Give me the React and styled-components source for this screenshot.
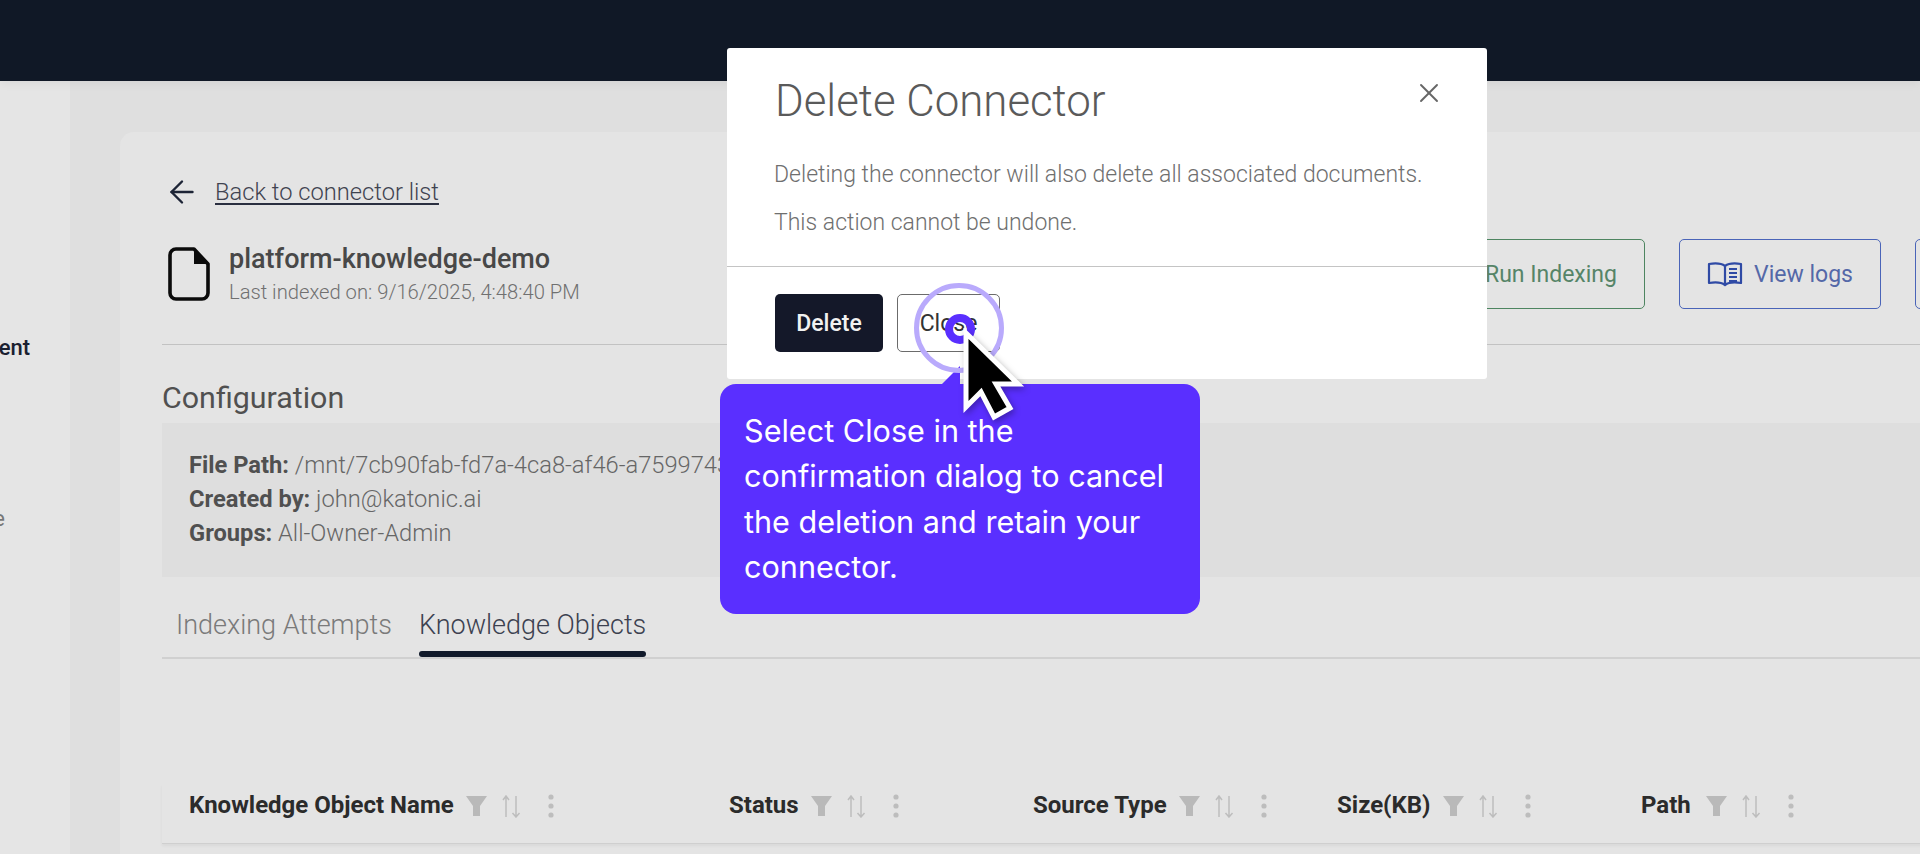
import React from "react";
import styled, { createGlobalStyle } from "styled-components";
import { ArrowLeft, X } from "lucide-react";

const Global = createGlobalStyle`
  html, body { margin: 0; padding: 0; height: 100%; overflow: hidden; background: #e4e4e4; }
  body { font-family: Roboto, "Liberation Sans", sans-serif; }
  * { box-sizing: border-box; }
`;

const Page = styled.div`
  position: relative;
  width: 1920px;
  height: 854px;
  overflow: hidden;
  display: flex;
  flex-direction: column;
`;
const TopBar = styled.header`
  height: 81px;
  flex: none;
  background: #101826;
  position: relative;
  box-shadow: 0 2px 10px rgba(0, 0, 0, 0.06);
`;
const Body = styled.div`
  flex: 1;
  display: flex;
  min-height: 0;
  background: #dfdfdf;
`;
const Sidebar = styled.aside`
  width: 70px;
  flex: none;
  background: #e5e5e5;
  padding-top: 254px;
  overflow: hidden;
`;
const SideItem = styled.div`
  display: flex;
  justify-content: flex-end;
  font-size: 22px;
  line-height: 26px;
  white-space: nowrap;
  color: ${(p) => (p.$active ? "#1a2030" : "#777")};
  font-weight: ${(p) => (p.$active ? 500 : 400)};
  margin-right: ${(p) => p.$right}px;
  margin-bottom: ${(p) => p.$gap || 0}px;
`;
const Main = styled.main`
  flex: none;
  padding: 51px 0 0 50px;
`;
const Card = styled.section`
  width: 1955px;
  height: 760px;
  background: #e4e4e4;
  border-radius: 14px;
  padding: 46px 40px 0 42px;
`;
const BackRow = styled.div`
  display: flex;
  align-items: center;
  gap: 15px;
  height: 28px;
  padding-left: 2px;
  color: #1d2436;
`;
const BackLink = styled.a`
  font-size: 23.7px;
  font-weight: 300;
  color: #3f4350;
  text-decoration: underline;
  text-underline-offset: 3px;
  text-decoration-color: #2a2f40;
`;
const HeadRow = styled.div`
  display: flex;
  align-items: center;
  height: 70px;
  margin-top: 33px;
`;
const FileBox = styled.div`
  display: flex;
  align-items: center;
  gap: 19px;
  padding-left: 6px;
`;
const FileName = styled.div`
  font-size: 27px;
  line-height: 32px;
  font-weight: 500;
  color: #484848;
`;
const FileMeta = styled.div`
  font-size: 20.2px;
  line-height: 26px;
  margin-top: 4px;
  font-weight: 300;
  color: #707070;
`;
const Actions = styled.div`
  margin-left: auto;
  display: flex;
  gap: 34px;
`;
const ActionButton = styled.button`
  height: 70px;
  width: ${(p) => p.$w}px;
  background: transparent;
  border: 1.5px solid ${(p) => p.$c};
  border-radius: 5px;
  color: ${(p) => p.$text};
  font: 400 23px Roboto, sans-serif;
  display: inline-flex;
  align-items: center;
  justify-content: ${(p) => p.$justify || "center"};
  gap: 11px;
  padding: 0 ${(p) => p.$pr || 0}px 0 0;
`;
const Rule = styled.hr`
  margin: 35px 0 0;
  border: 0;
  height: 1px;
  background: #c2c2c2;
`;
const SectionTitle = styled.h2`
  margin: 36px 0 0;
  font-size: 30.4px;
  line-height: 34px;
  font-weight: 400;
  color: #505050;
`;
const ConfigBox = styled.div`
  margin-top: 8px;
  height: 154px;
  background: #dedede;
  padding: 25px 27px;
  font-size: 23.7px;
  line-height: 34px;
  font-weight: 300;
  color: #666;
`;
const ConfigLine = styled.div`
  white-space: nowrap;
  b { font-weight: 700; color: #505050; }
`;
const Tabs = styled.div`
  margin-top: 22px;
  height: 60px;
  display: flex;
  gap: 27px;
  padding-left: 14px;
  border-bottom: 2px solid #d0d0d0;
`;
const Tab = styled.div`
  position: relative;
  font-size: 27px;
  line-height: 52px;
  font-weight: 300;
  color: ${(p) => (p.$active ? "#3c4150" : "#7a7a7a")};
  ${(p) => p.$active && `
    &::after {
      content: "";
      position: absolute;
      left: 0;
      right: 0;
      top: 52px;
      height: 6px;
      border-radius: 3px;
      background: #111a2b;
    }
  `}
`;
const HeaderGrid = styled.div`
  margin-top: 125px;
  height: 60px;
  display: grid;
  grid-template-columns: 540px 304px 304px 304px 304px 1fr;
  padding-left: 27px;
  border-bottom: 1px solid #cfcfcf;
  box-shadow: 0 2px 3px rgba(0, 0, 0, 0.05);
  align-items: start;
`;
const HeaderCell = styled.div`
  display: flex;
  align-items: center;
  height: 24px;
  margin-top: 9px;
  font-size: 24px;
  font-weight: 700;
  color: #2b2b2b;
  white-space: nowrap;
`;
const CellIcons = styled.span`
  display: inline-flex;
  align-items: center;
  margin-left: ${(p) => p.$ml || 12}px;
  margin-top: 2px;
  gap: 13px;
  svg:last-child { margin-left: 14px; }
`;

const Modal = styled.div`
  position: absolute;
  left: 727px;
  top: 48px;
  width: 760px;
  height: 331px;
  background: #fff;
  border-radius: 3px;
`;
const ModalHead = styled.div`
  height: 118px;
  padding: 29px 48px 0;
  position: relative;
`;
const ModalTitle = styled.h1`
  margin: 0;
  font-size: 43.8px;
  line-height: 48px;
  font-weight: 300;
  color: #5a5a5a;
`;
const CloseX = styled.span`
  position: absolute;
  right: 42px;
  top: 29px;
  color: #666;
  display: flex;
`;
const ModalBody = styled.div`
  height: 104px;
  padding: 0 47px;
  border-bottom: 1px solid #c4c4c4;
  font-size: 23px;
  font-weight: 300;
  color: #6f6f6f;
  line-height: 24px;
  p { margin: 0 0 24px; white-space: nowrap; }
  margin-top: -3px;
`;
const ModalFoot = styled.div`
  display: flex;
  gap: 14px;
  padding: 27px 48px 0;
`;
const SolidButton = styled.button`
  width: 108px;
  height: 58px;
  border: 0;
  border-radius: 5px;
  background: #141829;
  color: #f1f1f1;
  font: 500 23px Roboto, sans-serif;
  padding: 0;
`;
const OutlineButton = styled.button`
  width: 103px;
  height: 58px;
  border: 1.5px solid #6b6b6b;
  border-radius: 5px;
  background: #fff;
  color: #333;
  font: 400 23px Roboto, sans-serif;
  padding: 0;
`;
const Tooltip = styled.div`
  position: absolute;
  left: 720px;
  top: 384px;
  width: 480px;
  height: 230px;
  background: #5a2fff;
  border-radius: 16px;
  padding: 23.5px 24px;
  color: #fff;
  font-family: Inter, sans-serif;
  font-size: 30.6px;
  line-height: 45.6px;
  &::before {
    content: "";
    position: absolute;
    left: 222px;
    top: -18px;
    border-style: solid;
    border-width: 0 0 18px 18px;
    border-color: transparent transparent #5a2fff transparent;
  }
`;
const Ring = styled.div`
  position: absolute;
  left: 914px;
  top: 283px;
  width: 90px;
  height: 90px;
  border-radius: 50%;
  border: 5px solid #b9aafc;
`;
const Dot = styled.div`
  position: absolute;
  left: 945px;
  top: 314px;
  width: 30px;
  height: 30px;
  border-radius: 50%;
  border: 8px solid #5a2fff;
`;
const Pointer = styled.svg`
  position: absolute;
  left: 956px;
  top: 328px;
  filter: drop-shadow(2px 3px 3px rgba(0, 0, 0, 0.3));
`;

const Funnel = () => (
  <svg width="21" height="20" viewBox="0 0 21 20"><path d="M0 0h21l-7 10v10h-7V10z" fill="#b9b9b9" /></svg>
);
const Sort = () => (
  <svg width="21" height="23" viewBox="0 0 21 23" fill="none" stroke="#bdbdbd" strokeWidth="1.5">
    <path d="M6 22V1M3 5l3-4 3 4M16 1v21M12.5 18l3.5 4 3.5-4" />
  </svg>
);
const Dots = () => (
  <svg width="6" height="24" viewBox="0 0 6 24" fill="#bdbdbd">
    <circle cx="3" cy="3" r="2.6" /><circle cx="3" cy="12" r="2.6" /><circle cx="3" cy="21" r="2.6" />
  </svg>
);
const FileIcon = () => (
  <svg width="42" height="54" viewBox="0 0 42 54" fill="none">
    <path d="M8 2h18l14 15v29a6 6 0 0 1-6 6H8a6 6 0 0 1-6-6V8a6 6 0 0 1 6-6z" stroke="#0b0b0b" strokeWidth="3.6" strokeLinejoin="round" />
    <path d="M26 3l13 14H26z" fill="#0b0b0b" />
  </svg>
);
const BookIcon = () => (
  <svg width="36" height="26" viewBox="0 0 36 26" fill="none" stroke="#2f4aa5" strokeWidth="2.2" strokeLinejoin="round">
    <path d="M18 5C14 2 8 2 2 3v19c6-1 12-1 16 2 4-3 10-3 16-2V3c-6-1-12-1-16 2zM18 5v19" />
    <path d="M22 8h8M22 12h8M22 16h8M22 20h8" strokeWidth="1.8" />
  </svg>
);

const columns = [
  { name: "Knowledge Object Name" },
  { name: "Status" },
  { name: "Source Type" },
  { name: "Size(KB)" },
  { name: "Path", ml: 15 },
];

export default function App() {
  return (
    <Page>
      <Global />
      <TopBar />
      <Body>
        <Sidebar>
          <SideItem $active $right={40} $gap={145}>Management</SideItem>
          <SideItem $right={65}>Knowledge</SideItem>
        </Sidebar>
        <Main>
          <Card>
            <BackRow>
              <ArrowLeft size={36} strokeWidth={1.6} />
              <BackLink>Back to connector list</BackLink>
            </BackRow>
            <HeadRow>
              <FileBox>
                <FileIcon />
                <div>
                  <FileName>platform-knowledge-demo</FileName>
                  <FileMeta>Last indexed on: 9/16/2025, 4:48:40 PM</FileMeta>
                </div>
              </FileBox>
              <Actions>
                <ActionButton $w={200} $c="#4d8560" $text="#568468" $justify="flex-end" $pr={27}>Run Indexing</ActionButton>
                <ActionButton $w={202} $c="#4a64b8" $text="#5468a8"><BookIcon />View logs</ActionButton>
                <ActionButton $w={120} $c="#4a64b8" $text="#5468a8" />
              </Actions>
            </HeadRow>
            <Rule />
            <SectionTitle>Configuration</SectionTitle>
            <ConfigBox>
              <ConfigLine><b>File Path:</b> /mnt/7cb90fab-fd7a-4ca8-af46-a7599743</ConfigLine>
              <ConfigLine><b>Created by:</b> john@katonic.ai</ConfigLine>
              <ConfigLine><b>Groups:</b> All-Owner-Admin</ConfigLine>
            </ConfigBox>
            <Tabs>
              <Tab>Indexing Attempts</Tab>
              <Tab $active>Knowledge Objects</Tab>
            </Tabs>
            <HeaderGrid>
              {columns.map((c) => (
                <HeaderCell key={c.name}>
                  {c.name}
                  <CellIcons $ml={c.ml}><Funnel /><Sort /><Dots /></CellIcons>
                </HeaderCell>
              ))}
            </HeaderGrid>
          </Card>
        </Main>
      </Body>
      <Modal>
        <ModalHead>
          <ModalTitle>Delete Connector</ModalTitle>
          <CloseX><X size={32} strokeWidth={1.4} /></CloseX>
        </ModalHead>
        <ModalBody>
          <p>Deleting the connector will also delete all associated documents.</p>
          <p>This action cannot be undone.</p>
        </ModalBody>
        <ModalFoot>
          <SolidButton>Delete</SolidButton>
          <OutlineButton>Close</OutlineButton>
        </ModalFoot>
      </Modal>
      <Tooltip>Select Close in the confirmation dialog to cancel the deletion and retain your connector.</Tooltip>
      <Ring />
      <Dot />
      <Pointer width="70" height="96" viewBox="0 0 70 96">
        <path d="M10 5L62 56H40L54 80L38 89L25 64L10 79Z" fill="#000" stroke="#fff" strokeWidth="5" strokeLinejoin="miter" />
      </Pointer>
    </Page>
  );
}
